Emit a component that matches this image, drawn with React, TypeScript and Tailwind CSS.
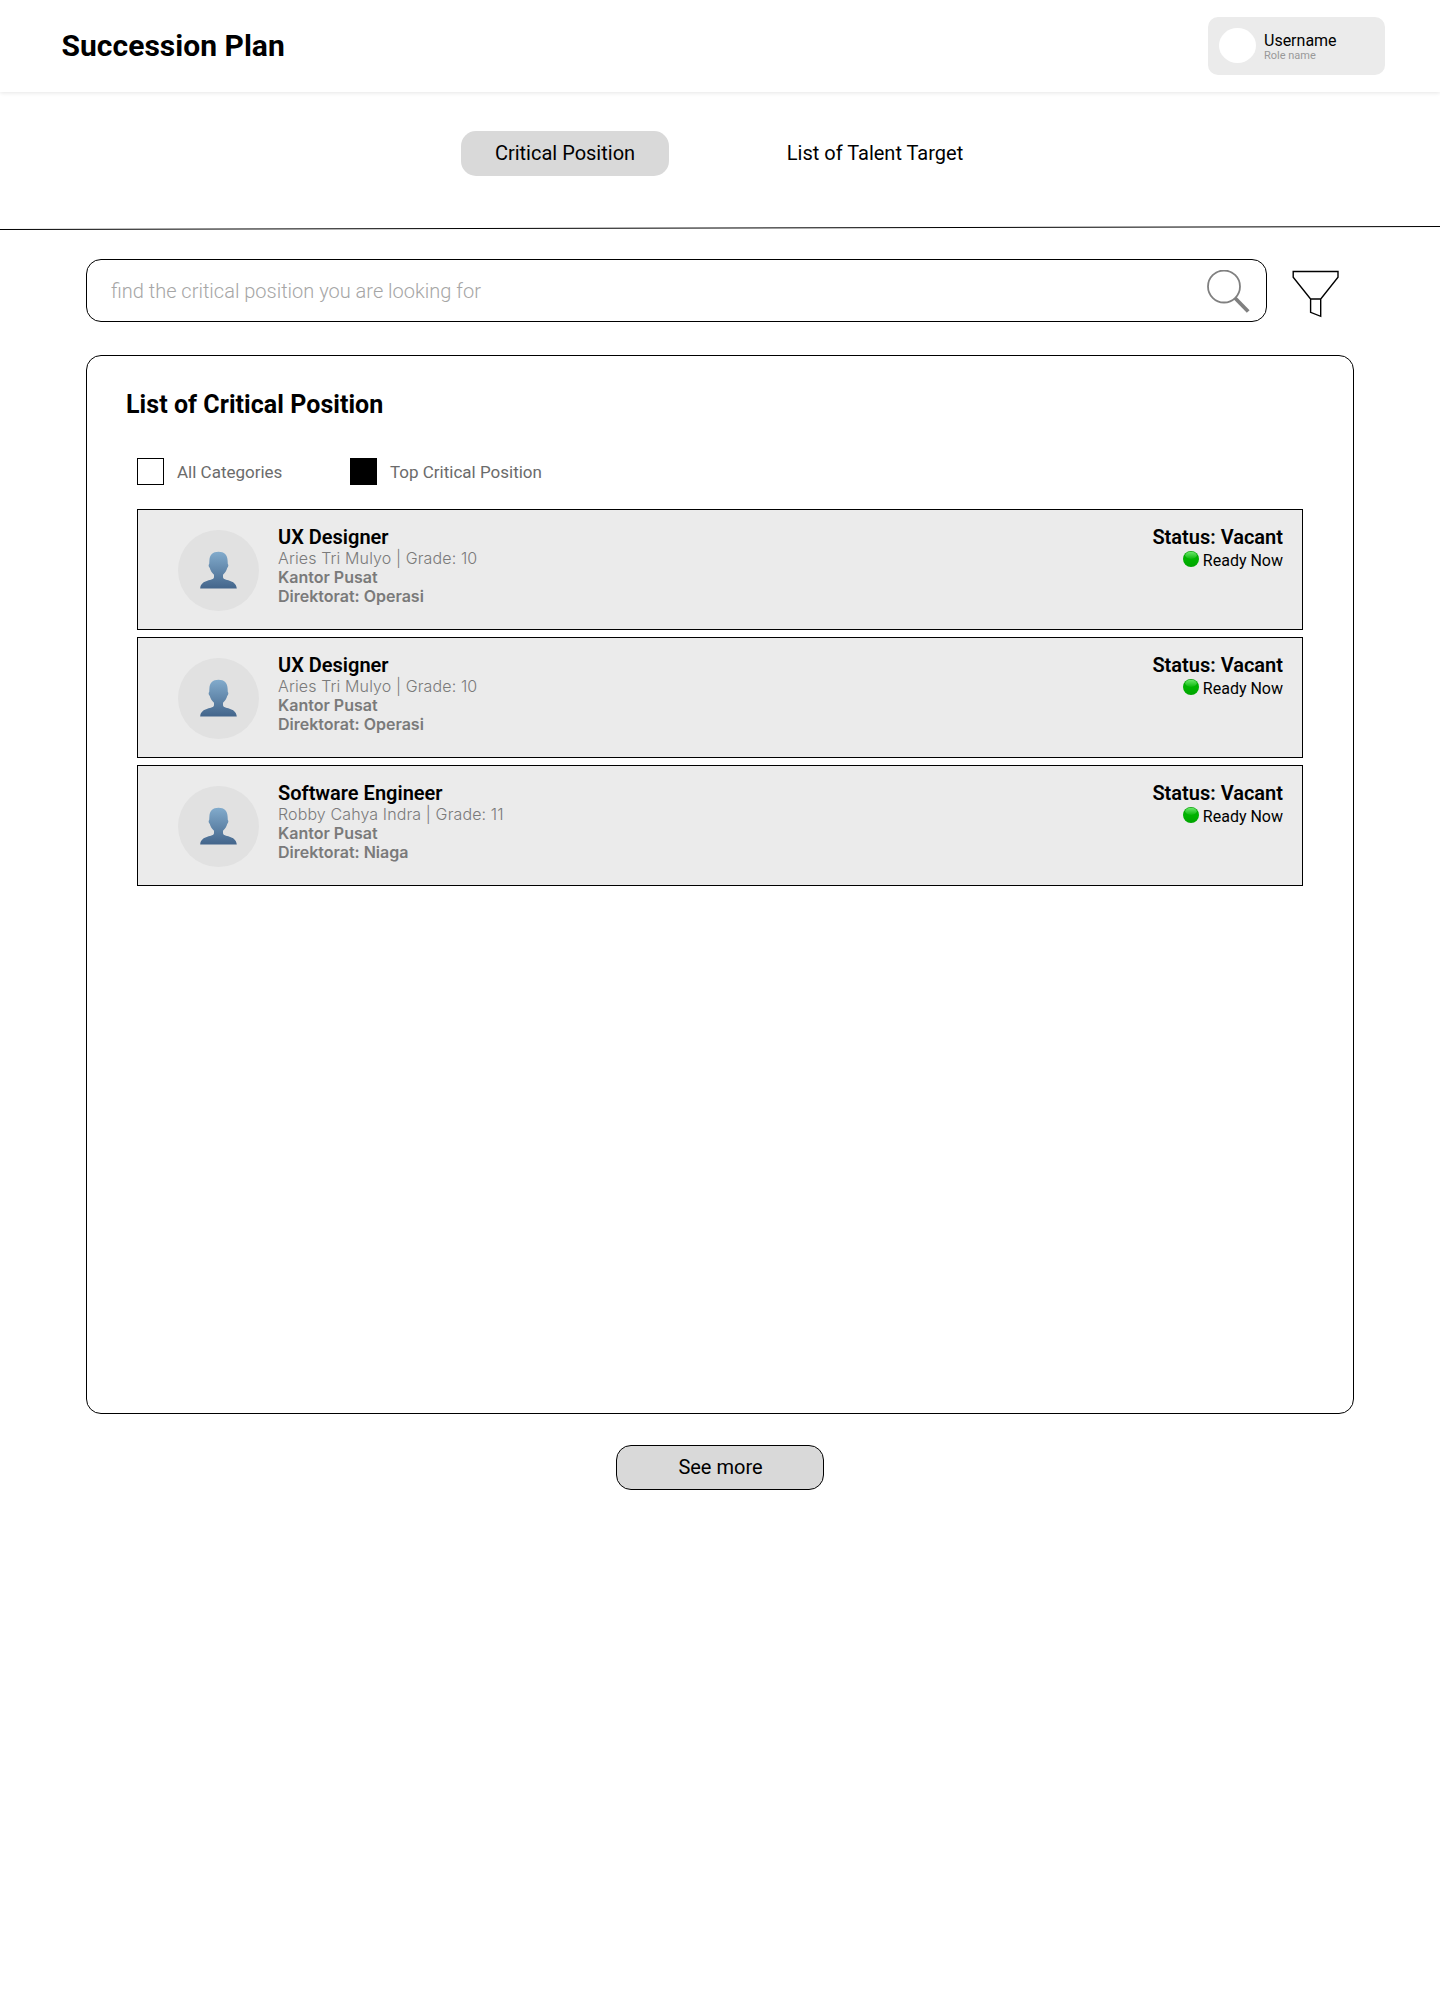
type Position = {
  title: string;
  holder: string;
  grade: number;
  office: string;
  directorate: string;
};

const positions: Position[] = [
  { title: 'UX Designer', holder: 'Aries Tri Mulyo', grade: 10, office: 'Kantor Pusat', directorate: 'Operasi' },
  { title: 'UX Designer', holder: 'Aries Tri Mulyo', grade: 10, office: 'Kantor Pusat', directorate: 'Operasi' },
  { title: 'Software Engineer', holder: 'Robby Cahya Indra', grade: 11, office: 'Kantor Pusat', directorate: 'Niaga' },
];

function PersonIcon() {
  return (
    <svg width="37" height="38" viewBox="0 0 37 38" className="block">
      <defs>
        <linearGradient id="person" x1="0" y1="0" x2="0" y2="1">
          <stop offset="0" stopColor="#82abcc" />
          <stop offset="1" stopColor="#43658b" />
        </linearGradient>
      </defs>
      <path
        d="M18.5 0.8C24.3 0.8 27.4 4.2 27.6 9.5L27.8 13C28.8 13.4 28.4 16.2 27.3 16.8C26.6 19.8 24.9 22 23 23.8V26C23 30.6 36 27.4 36.8 37.6H0.2C1 27.4 14 30.6 14 26V23.8C12.1 22 10.4 19.8 9.7 16.8C8.6 16.2 8.2 13.4 9.2 13L9.4 9.5C9.6 4.2 12.7 0.8 18.5 0.8Z"
        fill="url(#person)"
      />
    </svg>
  );
}

function ReadyDot() {
  return (
    <svg width="16" height="16" viewBox="0 0 16 16" className="mr-1 -mt-[3px] block">
      <defs>
        <linearGradient id="dot" x1="0" y1="0" x2="0" y2="1">
          <stop offset="0" stopColor="#0aa00a" />
          <stop offset="0.5" stopColor="#00b400" />
          <stop offset="1" stopColor="#00a400" />
        </linearGradient>
        <linearGradient id="gloss" x1="0" y1="0" x2="0" y2="1">
          <stop offset="0" stopColor="#6be86b" />
          <stop offset="1" stopColor="#0cb80c" />
        </linearGradient>
      </defs>
      <circle cx="8" cy="8" r="8" fill="url(#dot)" />
      <ellipse cx="8" cy="4.3" rx="5.8" ry="3.6" fill="url(#gloss)" />
    </svg>
  );
}

function PositionRow({ item }: { item: Position }) {
  return (
    <li className="flex h-[121px] items-start border border-black bg-[#ebebeb] pr-[19px] pl-10">
      <div className="mt-[19.5px] flex size-[81px] shrink-0 items-center justify-center rounded-full bg-[#e1e1e1] pb-px">
        <PersonIcon />
      </div>
      <div className="mt-4 ml-[19px] flex-1 font-['Inter',sans-serif] text-[16px] leading-[19px] text-[#7a7a7a]">
        <h3 className="font-['Roboto',sans-serif] text-[20px] leading-[23px] font-semibold text-black">{item.title}</h3>
        <p className="font-[350] tracking-[0.12px]">{item.holder} | Grade: {item.grade}</p>
        <p className="font-semibold">{item.office}</p>
        <p className="font-semibold">Direktorat: {item.directorate}</p>
      </div>
      <div className="mt-4 flex flex-col items-end">
        <p className="text-[20px] leading-[23px] font-semibold">Status: Vacant</p>
        <p className="mt-[2px] flex items-center text-[16px] leading-[19px]">
          <ReadyDot />
          Ready Now
        </p>
      </div>
    </li>
  );
}

export default function App() {
  return (
    <div className="h-[2002px] w-[1440px] overflow-hidden bg-white font-['Roboto',sans-serif] text-black">
      <header className="flex h-[92px] items-center justify-between pr-[55px] pl-[61.5px] shadow-[0_1px_4px_rgba(0,0,0,0.1)]">
        <h1 className="pb-[2px] text-[30px] leading-[35px] font-bold tracking-[0.03px]">Succession Plan</h1>
        <div className="flex h-[58px] w-[177px] items-center rounded-[10px] bg-[#ebebeb] pl-[11px]">
          <div className="mb-px h-[35px] w-[37px] rounded-[50%] bg-white" />
          <div className="ml-2">
            <p className="text-[16px] leading-[18px]">Username</p>
            <p className="text-[11px] leading-[11px] text-[#999]">Role name</p>
          </div>
        </div>
      </header>

      <nav className="flex h-[134px] items-start pt-[39px] pl-[461px] text-[20px]">
        <button className="h-[45px] w-[208px] rounded-[15px] bg-[#d9d9d9] pb-[2px]">Critical Position</button>
        <button className="ml-[102px] h-[45px] w-[208px] pb-[2px]">List of Talent Target</button>
      </nav>
      <svg width="1440" height="4" viewBox="0 0 1440 4" className="block">
        <line x1="0" y1="3.5" x2="1440" y2="0.5" stroke="#000" strokeWidth="1" />
      </svg>

      <main className="px-[86px] pt-[29px]">
        <div className="flex">
          <div className="flex h-[63px] w-[1181px] items-center justify-between rounded-[15px] border border-black pr-[16px] pl-6">
            <span className="text-[20px] font-light text-[#a6a6a6]">find the critical position you are looking for</span>
            <svg width="43" height="43" viewBox="0 0 43 43" fill="none" stroke="#808080" className="mt-px">
              <circle cx="17" cy="16.5" r="16" strokeWidth="1.8" />
              <path d="M28 28L41.2 41.5" strokeWidth="3.8" />
            </svg>
          </div>
          <svg width="48" height="48" viewBox="0 0 48 48" fill="none" stroke="#000" strokeWidth="1.4" className="mt-[11px] ml-[25px]">
            <path d="M1.2 1.5H46V7.2L28.7 29V46.3L18.6 42.3V29L1.2 7.2ZM18.6 29H28.7" />
          </svg>
        </div>

        <section className="mt-[33px] h-[1059px] rounded-[15px] border border-black px-[50px]">
          <h2 className="mt-[34px] -ml-[11px] text-[25px] leading-[29px] font-bold tracking-[0.05px]">List of Critical Position</h2>
          <div className="mt-[39px] flex text-[17px] leading-[27px] text-[#6b6b6b]">
            <div className="flex w-[213px]">
              <span className="mr-[13px] size-[27px] border border-black" />
              <span className="pt-px">All Categories</span>
            </div>
            <div className="flex">
              <span className="mr-[13px] size-[27px] bg-black" />
              <span className="pt-px">Top Critical Position</span>
            </div>
          </div>
          <ul className="mt-[23px] flex flex-col gap-[7px]">
            {positions.map((item, i) => (
              <PositionRow key={i} item={item} />
            ))}
          </ul>
        </section>

        <button className="mx-auto mt-[31px] block h-[45px] w-[208px] rounded-[15px] border border-black bg-[#d9d9d9] pb-[2px] pl-px text-[20px]">
          See more
        </button>
      </main>
    </div>
  );
}
